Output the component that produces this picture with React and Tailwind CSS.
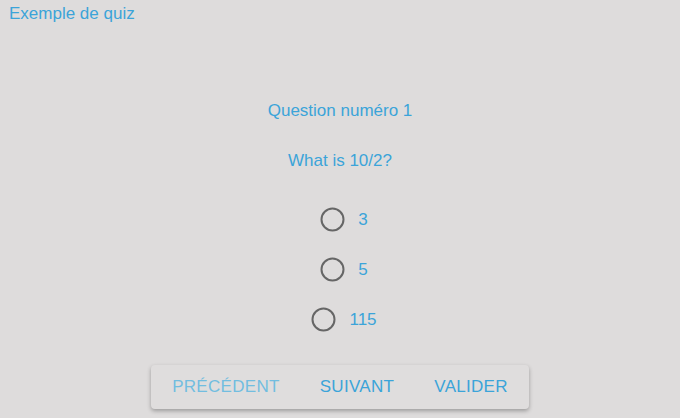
import React from 'react';

const choices = ['3', '5', '115'];

const RadioIcon = () => (
  <svg width="25" height="25" viewBox="0 0 25 25" className="shrink-0">
    <circle cx="12.5" cy="12.5" r="11" fill="none" stroke="#666666" strokeWidth="2" />
  </svg>
);

const App = () => {
  return (
    <div
      className="w-[680px] h-[418px] bg-[#dedcdc] text-[#3ba4d9] overflow-hidden flex flex-col"
      style={{ fontFamily: '"Liberation Sans", Arial, sans-serif' }}
    >
      {/* Titre */}
      <div className="pl-[9px] pt-[4px] text-[17px] leading-[20px]">Exemple de quiz</div>

      {/* Question */}
      <div className="flex flex-col items-center mt-[77px]">
        <div className="text-[17px] leading-[20px]">Question numéro 1</div>
        <div className="text-[17px] leading-[20px] mt-[30px]">What is 10/2?</div>

        <div className="flex flex-col items-center mt-[36px] gap-[25px]">
          {choices.map((c) => (
            <label key={c} className="flex items-center gap-[13px] pl-2 cursor-pointer">
              <RadioIcon />
              <span className="text-[17px] leading-[20px]">{c}</span>
            </label>
          ))}
        </div>

        {/* Navigation */}
        <div className="mt-[33px] flex items-center h-[44px] px-[1px] rounded bg-[#dfdddd] shadow-[0_2px_4px_rgba(0,0,0,0.3)]">
          <button className="px-[20px] text-[17px] tracking-[0.3px] uppercase text-[#72bde0]">Précédent</button>
          <button className="px-[20px] text-[17px] tracking-[0.3px] uppercase">Suivant</button>
          <button className="px-[20px] text-[17px] tracking-[0.3px] uppercase">Valider</button>
        </div>
      </div>
    </div>
  );
};

export default App;
